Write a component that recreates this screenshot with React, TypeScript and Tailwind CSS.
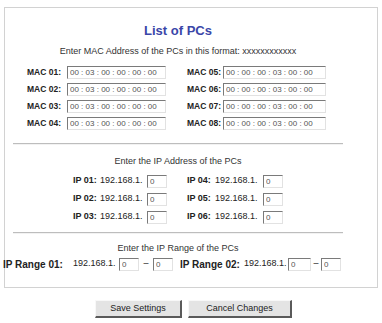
import React from 'react';

const inputCls =
  'h-[13px] bg-white border border-t-[#7a7a7a] border-l-[#7a7a7a] border-r-[#e2e2e2] border-b-[#e2e2e2] px-[2px] text-[8px] leading-[11px] text-[#555] outline-none';

const macLeft = '00 : 03 : 00 : 00 : 00 : 00';
const macRight = '00 : 00 : 00 : 03 : 00 : 00';

function MacRow({ a, b }: { a: string; b: string }) {
  return (
    <div className="flex items-center h-[17px]">
      <span className="ml-[14px] w-[40px] text-[8.5px] font-bold text-[#222]">{a}:</span>
      <input readOnly value={macLeft} className={`${inputCls} w-[99px]`} />
      <span className="ml-[21px] w-[36px] text-[8.5px] font-bold text-[#222]">{b}:</span>
      <input readOnly value={macRight} className={`${inputCls} w-[103px]`} />
    </div>
  );
}

function IpRow({ a, b }: { a: string; b: string }) {
  return (
    <div className="flex items-center h-[18px] text-[9px] text-[#222]">
      <span className="ml-[60px] w-[27px] font-bold">{a}:</span>
      <span className="w-[47px]">192.168.1.</span>
      <input readOnly value="0" className={`${inputCls} w-[20px]`} />
      <span className="ml-[20px] w-[28px] font-bold">{b}:</span>
      <span className="w-[48px]">192.168.1.</span>
      <input readOnly value="0" className={`${inputCls} w-[20px]`} />
    </div>
  );
}

export default function App() {
  return (
    <div className="w-[382px] h-[323px] bg-white font-['Liberation_Sans',Arial,sans-serif] overflow-hidden">
      <div className="ml-[4px] pt-[7px]">
        <div className="w-[374px] h-[281px] border border-[#d2d2d2]">
          <div className="w-[330px] ml-[8px] flex flex-col">
            <h1 className="mt-[15px] text-center text-[13px] leading-[16px] font-bold text-[#3a46a8]">
              List of PCs
            </h1>
            <p className="mt-[6px] text-center text-[9px] leading-[12px] text-[#333]">
              Enter MAC Address of the PCs in this format: xxxxxxxxxxxx
            </p>
            <div className="mt-[7px] flex flex-col">
              <MacRow a="MAC 01" b="MAC 05" />
              <MacRow a="MAC 02" b="MAC 06" />
              <MacRow a="MAC 03" b="MAC 07" />
              <MacRow a="MAC 04" b="MAC 08" />
            </div>
            <div className="mt-[11px] h-[2px] border-t border-[#bdbdbd] border-b border-b-[#f2f2f2]" />
            <p className="mt-[10px] text-center text-[9px] leading-[12px] text-[#333]">
              Enter the IP Address of the PCs
            </p>
            <div className="mt-[5px] flex flex-col">
              <IpRow a="IP 01" b="IP 04" />
              <IpRow a="IP 02" b="IP 05" />
              <IpRow a="IP 03" b="IP 06" />
            </div>
            <div className="mt-[6px] h-[2px] border-t border-[#bdbdbd] border-b border-b-[#f2f2f2]" />
            <p className="mt-[8px] text-center text-[9px] leading-[12px] text-[#333]">
              Enter the IP Range of the PCs
            </p>
            <div className="-ml-[10px] mt-[2px] flex items-center h-[16px] text-[9px] text-[#222] whitespace-nowrap">
              <span className="w-[70px] font-bold text-[10px]">IP Range 01:</span>
              <span className="w-[46px]">192.168.1.</span>
              <input readOnly value="0" className={`${inputCls} w-[20px]`} />
              <span className="w-[14px] text-center">–</span>
              <input readOnly value="0" className={`${inputCls} w-[20px]`} />
              <span className="ml-[7px] w-[64px] font-bold text-[10px]">IP Range 02:</span>
              <span className="w-[44px]">192.168.1.</span>
              <input readOnly value="0" className={`${inputCls} w-[23px]`} />
              <span className="w-[10px] text-center">–</span>
              <input readOnly value="0" className={`${inputCls} w-[20px]`} />
            </div>
          </div>
        </div>
      </div>
      <div className="mt-[12px] flex gap-[6px] ml-[95px]">
        <button className="w-[87px] h-[18px] bg-[#e4e4e4] border border-t-[#f8f8f8] border-l-[#f8f8f8] border-r-2 border-b-2 border-r-[#5a5a5a] border-b-[#5a5a5a] text-[9px] text-[#222]">
          Save Settings
        </button>
        <button className="w-[104px] h-[18px] bg-[#e4e4e4] border border-t-[#f8f8f8] border-l-[#f8f8f8] border-r-2 border-b-2 border-r-[#5a5a5a] border-b-[#5a5a5a] text-[9px] text-[#222]">
          Cancel Changes
        </button>
      </div>
    </div>
  );
}
